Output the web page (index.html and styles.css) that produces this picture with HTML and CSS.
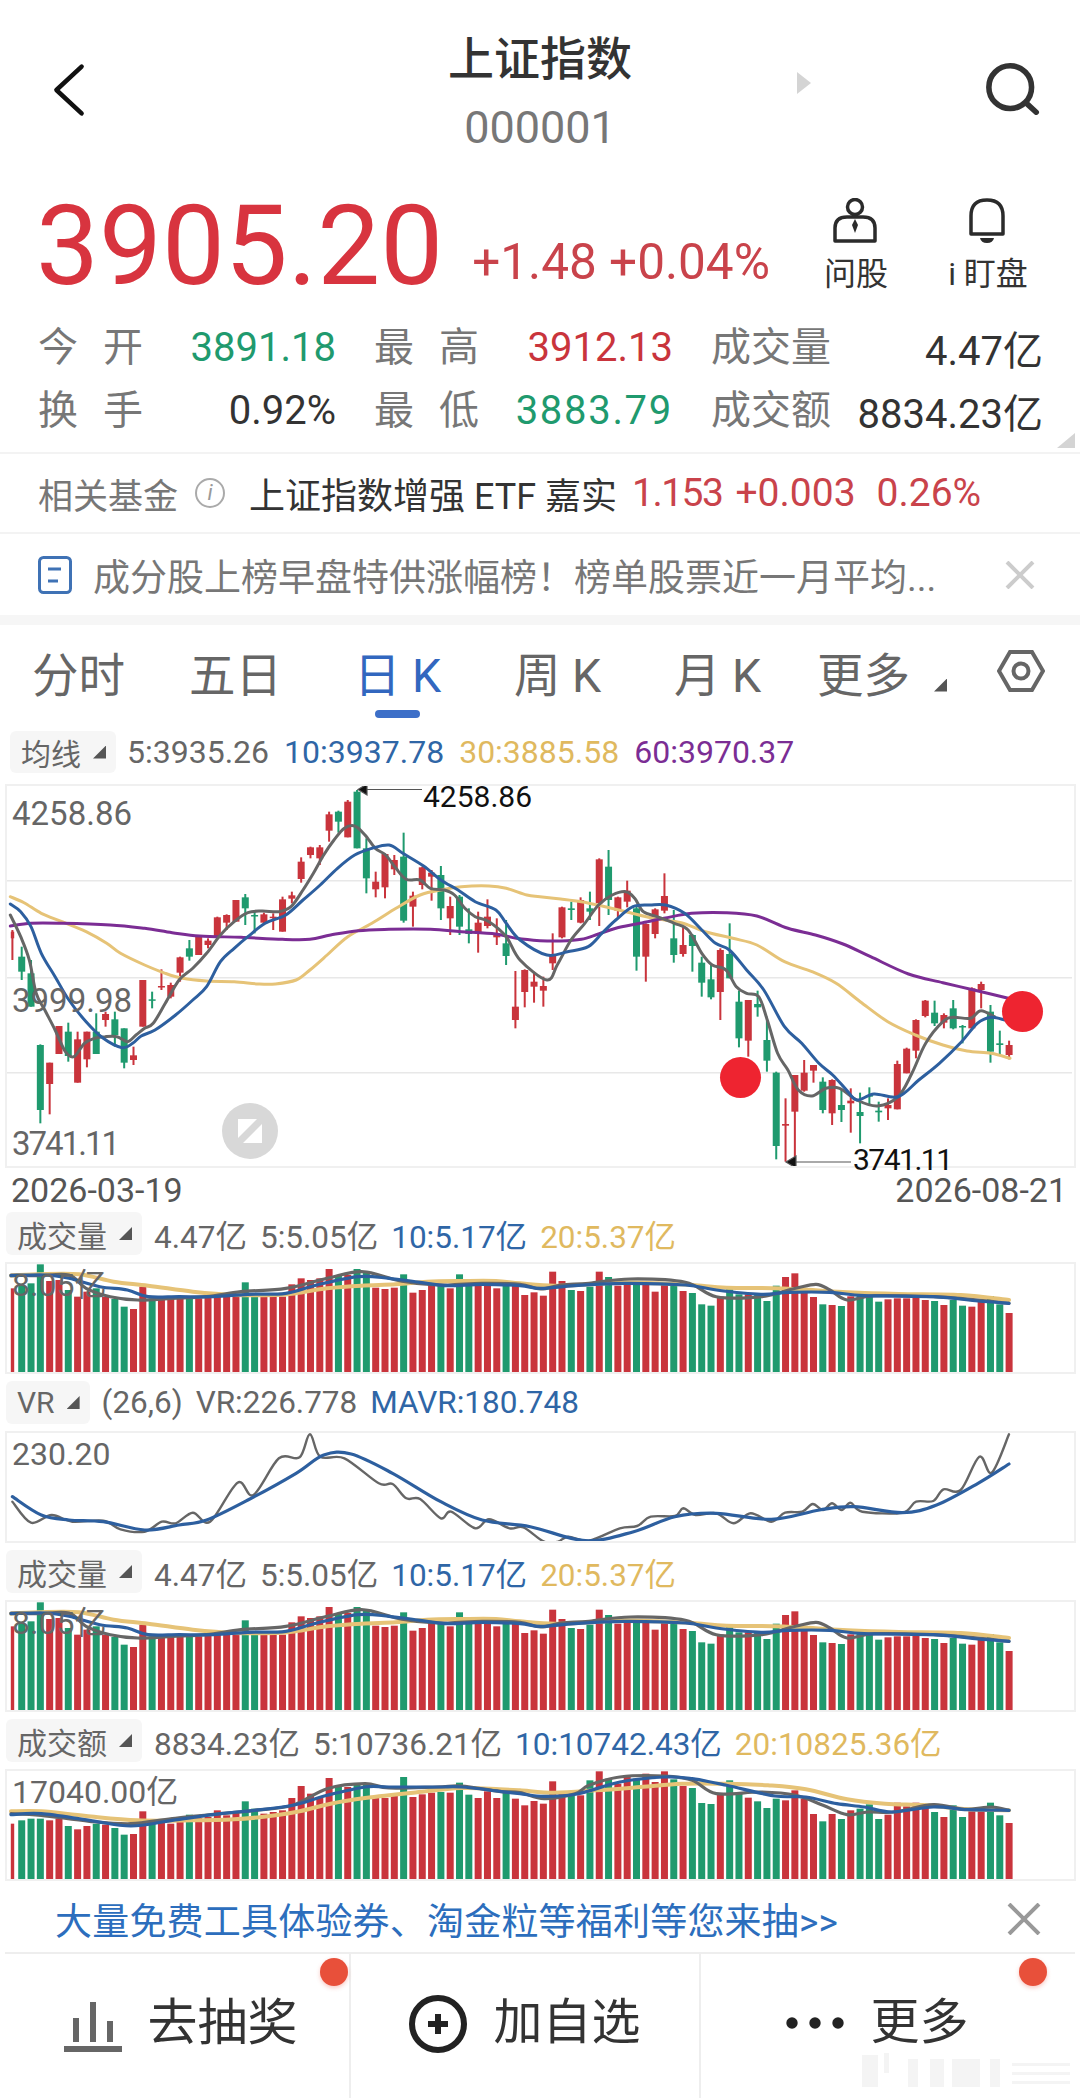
FILE: index.html
```html
<!DOCTYPE html>
<html lang="zh-CN">
<head>
    <meta charset="UTF-8">
    <meta name="viewport" content="width=device-width, initial-scale=1.0">
    <title>上证指数</title>
    <link rel="stylesheet" href="styles.css">
    <script src="chart.js" defer></script>
</head>
<body>

<header class="topbar">
    <div class="side">
        <svg class="back-icon" viewBox="0 0 36 60"><path d="M32 4 L4 30 L32 56"/></svg>
    </div>
    <div class="title-block">
        <div class="title">上证指数</div>
        <div class="code">000001</div>
        <span class="next-arrow"></span>
    </div>
    <div class="side side-right">
        <svg class="search-icon" viewBox="0 0 60 56"><circle cx="27" cy="26" r="23"/><path d="M44 43 L55 53"/></svg>
    </div>
</header>

<section class="quote">
    <div class="price-group">
        <span class="price">3905.20</span>
        <span class="change">+1.48 +0.04%</span>
    </div>
    <div class="quick-links">
        <div class="quick-link">
            <svg class="quick-icon" viewBox="0 0 44 46">
                <circle cx="22" cy="9" r="7.5"/>
                <path d="M2 43 V30 Q2 19 14 19 H30 Q42 19 42 30 V43 Z"/>
                <path class="fill" d="M22 21 L25 27 L22 35 L19 27 Z"/>
            </svg>
            <span>问股</span>
        </div>
        <div class="quick-link">
            <svg class="quick-icon" viewBox="0 0 44 46">
                <path d="M6 36 V18 Q6 2 22 2 Q38 2 38 18 V36 Z"/>
                <path class="fill" d="M15 40 H29 Q28 45 22 45 Q16 45 15 40 Z"/>
            </svg>
            <span>i 盯盘</span>
        </div>
    </div>
</section>

<section class="stats">
    <div class="stat"><span class="stat-label spaced">今开</span><span class="stat-value green">3891.18</span></div>
    <div class="stat"><span class="stat-label spaced">最高</span><span class="stat-value red">3912.13</span></div>
    <div class="stat"><span class="stat-label">成交量</span><span class="stat-value">4.47亿</span></div>
    <div class="stat"><span class="stat-label spaced">换手</span><span class="stat-value">0.92%</span></div>
    <div class="stat"><span class="stat-label spaced">最低</span><span class="stat-value green stat-wide">3883.79</span></div>
    <div class="stat"><span class="stat-label">成交额</span><span class="stat-value">8834.23亿</span></div>
    <span class="corner"></span>
</section>

<section class="fund-row">
    <span class="fund-label">相关基金</span>
    <span class="info-icon">i</span>
    <span class="fund-name">上证指数增强 ETF 嘉实</span>
    <span class="fund-num fund-price">1.153</span>
    <span class="fund-num">+0.003</span>
    <span class="fund-num fund-rate">0.26%</span>
</section>

<section class="news-row">
    <svg class="news-icon" viewBox="0 0 34 38">
        <rect x="1.5" y="1.5" width="31" height="35" rx="4"/>
        <path d="M10 13 H23 M10 25 H20"/>
    </svg>
    <span class="news-text">成分股上榜早盘特供涨幅榜！榜单股票近一月平均...</span>
    <svg class="close-icon" viewBox="0 0 30 28"><path d="M2 1 L28 27 M28 1 L2 27"/></svg>
</section>

<div class="band"></div>

<nav class="tabs">
    <span>分时</span>
    <span>五日</span>
    <span class="tab-active">日 K</span>
    <span>周 K</span>
    <span>月 K</span>
    <span class="tab-more">更多<i class="tri"></i></span>
    <svg class="hex-icon" viewBox="0 0 48 42"><path d="M13 2 H35 L46 21 L35 40 H13 L2 21 Z"/><circle cx="24" cy="21" r="7.5"/></svg>
</nav>

<div class="legend legend-main">
    <span class="chip">均线<i class="tri"></i></span>
    <span>5:3935.26</span>
    <span class="c-blue">10:3937.78</span>
    <span class="c-tan">30:3885.58</span>
    <span class="c-purple">60:3970.37</span>
</div>

<div class="chart-box main-chart">
    <svg id="kline"></svg>
    <span class="axis-label ax-main ax-high">4258.86</span>
    <span class="axis-label ax-main ax-mid">3999.98</span>
    <span class="axis-label ax-main ax-low">3741.11</span>
    <span class="note note-high">4258.86</span>
    <span class="note note-low">3741.11</span>
    <span class="dot dot-one"></span>
    <span class="dot dot-two"></span>
    <svg class="expand-btn" viewBox="0 0 56 56">
        <circle cx="28" cy="28" r="28"/>
        <path d="M16 16 H35 L16 35 Z M40 40 H21 L40 21 Z"/>
    </svg>
</div>

<div class="dates"><span>2026-03-19</span><span>2026-08-21</span></div>

<div class="panel">
    <div class="legend">
        <span class="chip">成交量<i class="tri"></i></span>
        <span>4.47亿</span><span>5:5.05亿</span>
        <span class="c-blue">10:5.17亿</span><span class="c-tan">20:5.37亿</span>
    </div>
    <div class="chart-box sub-chart">
        <svg id="vol1"></svg>
        <span class="axis-label ax-sub">8.05亿</span>
    </div>
</div>

<div class="panel">
    <div class="legend">
        <span class="chip">VR<i class="tri"></i></span>
        <span>(26,6)</span><span>VR:226.778</span>
        <span class="c-blue">MAVR:180.748</span>
    </div>
    <div class="chart-box sub-chart">
        <svg id="vr"></svg>
        <span class="axis-label ax-sub">230.20</span>
    </div>
</div>

<div class="panel">
    <div class="legend">
        <span class="chip">成交量<i class="tri"></i></span>
        <span>4.47亿</span><span>5:5.05亿</span>
        <span class="c-blue">10:5.17亿</span><span class="c-tan">20:5.37亿</span>
    </div>
    <div class="chart-box sub-chart">
        <svg id="vol2"></svg>
        <span class="axis-label ax-sub">8.05亿</span>
    </div>
</div>

<div class="panel panel-last">
    <div class="legend">
        <span class="chip">成交额<i class="tri"></i></span>
        <span>8834.23亿</span><span>5:10736.21亿</span>
        <span class="c-blue">10:10742.43亿</span><span class="c-tan">20:10825.36亿</span>
    </div>
    <div class="chart-box sub-chart">
        <svg id="amount"></svg>
        <span class="axis-label ax-sub">17040.00亿</span>
    </div>
</div>

<section class="banner">
    <span class="banner-text">大量免费工具体验券、淘金粒等福利等您来抽&gt;&gt;</span>
    <svg class="banner-close" viewBox="0 0 34 32"><path d="M2 1 L32 31 M32 1 L2 31"/></svg>
</section>

<footer class="bottom-bar">
    <div class="action action-first">
        <svg class="action-icon" viewBox="0 0 58 52"><path d="M12 18 V42 M29 2 V42 M46 21 V42 M0 49 H58"/></svg>
        <span>去抽奖</span>
        <i class="red-dot"></i>
    </div>
    <div class="action">
        <svg class="action-icon plus-icon" viewBox="0 0 58 58"><circle cx="29" cy="29" r="26"/><path d="M19 29 H39 M29 19 V39"/></svg>
        <span>加自选</span>
    </div>
    <div class="action action-last">
        <svg class="action-icon dots-icon" viewBox="0 0 58 12"><circle cx="6" cy="6" r="5.7"/><circle cx="29" cy="6" r="5.7"/><circle cx="52" cy="6" r="5.7"/></svg>
        <span>更多</span>
        <i class="red-dot"></i>
    </div>
    <svg class="watermark" viewBox="0 0 208 34">
        <rect x="0" y="2" width="16" height="32"/><rect x="22" y="0" width="5" height="20"/>
        <rect x="46" y="6" width="10" height="28"/><rect x="68" y="6" width="14" height="28"/>
        <rect x="90" y="6" width="28" height="28"/><rect x="128" y="6" width="10" height="28"/>
        <rect x="150" y="10" width="58" height="3"/><rect x="150" y="19" width="58" height="3"/><rect x="150" y="28" width="58" height="3"/>
    </svg>
</footer>

</body>
</html>
```

FILE: styles.css
```css
* {
    box-sizing: border-box;
}
html, body {
    margin: 0;
    padding: 0;
    background-color: #fff;
}
body {
    width: 1080px;
    height: 2098px;
    overflow: hidden;
    position: relative;
    font-family: Roboto, "Noto Sans CJK SC", sans-serif;
    color: #333;
}
i {
    font-style: normal;
}
svg {
    display: block;
}

/* top bar */
.topbar {
    display: flex;
    height: 187px;
}
.side {
    width: 200px;
    padding: 63px 0 0 52px;
}
.side-right {
    padding-left: 103px;
}
.back-icon {
    width: 34px;
    height: 54px;
    fill: none;
    stroke: #111;
    stroke-width: 5;
    stroke-linecap: round;
    stroke-linejoin: round;
}
.search-icon {
    width: 60px;
    height: 52px;
    fill: none;
    stroke: #333;
    stroke-width: 6;
    stroke-linecap: round;
}
.title-block {
    flex: 1;
    position: relative;
    text-align: center;
    padding-top: 31px;
}
.title {
    font-size: 46px;
    line-height: 56px;
    font-weight: 500;
}
.code {
    margin-top: 19px;
    font-size: 45px;
    line-height: 44px;
    color: #777;
}
.next-arrow {
    position: absolute;
    left: 597px;
    top: 72px;
    width: 14px;
    height: 22px;
    background-color: #d4d4d4;
    clip-path: polygon(0 0, 100% 50%, 0 100%);
}

/* price */
.quote {
    display: flex;
    justify-content: space-between;
    height: 128px;
    padding: 0 32px 0 36px;
}
.price-group {
    display: flex;
    align-items: flex-start;
    gap: 29px;
    height: 115px;
}
.price {
    padding-top: 3px;
    font-size: 112px;
    line-height: 112px;
    color: #d8343f;
}
.change {
    margin-top: 46px;
    font-size: 49.5px;
    line-height: 58px;
    color: #c9434b;
}
.quick-links {
    display: flex;
    gap: 12px;
    padding-top: 11px;
}
.quick-link {
    width: 120px;
    display: flex;
    flex-direction: column;
    align-items: center;
    font-size: 32px;
    line-height: 40px;
    gap: 10px;
}
.quick-icon {
    width: 44px;
    height: 46px;
    margin-left: -3px;
    fill: none;
    stroke: #2b2b2b;
    stroke-width: 3.5;
    stroke-linejoin: round;
}
.quick-icon .fill {
    fill: #2b2b2b;
    stroke: none;
}

/* stats */
.stats {
    position: relative;
    display: grid;
    grid-template-columns: 298px 299px 332px;
    grid-auto-rows: 63px;
    column-gap: 38px;
    height: 139px;
    padding-left: 38px;
    border-bottom: 2px solid #f3f3f3;
    font-size: 40px;
}
.stat {
    display: flex;
    justify-content: space-between;
    align-items: center;
}
.stat-label {
    padding-bottom: 6px;
    color: #777;
    font-size: 40px;
    white-space: nowrap;
}
.stat-value {
    padding-top: 2px;
}
.stat-wide {
    letter-spacing: 1.7px;
}
.spaced {
    letter-spacing: 25px;
    width: 105px;
}
.green {
    color: #1f9a6e;
}
.red {
    color: #c9343c;
}
.corner {
    position: absolute;
    right: 5px;
    top: 118px;
    width: 18px;
    height: 15px;
    background-color: #d4d4d4;
    clip-path: polygon(100% 0, 100% 100%, 0 100%);
}

/* fund + news */
.fund-row {
    display: flex;
    align-items: center;
    height: 80px;
    padding-left: 38px;
    border-bottom: 2px solid #f3f3f3;
    font-size: 35px;
}
.fund-label {
    color: #777;
    width: 142px;
}
.info-icon {
    width: 30px;
    height: 30px;
    margin: 0 24px 0 15px;
    border: 2px solid #aaa;
    border-radius: 50%;
    color: #999;
    font-size: 22px;
    line-height: 26px;
    text-align: center;
    font-style: italic;
}
.fund-name {
    width: 383px;
    white-space: nowrap;
    font-size: 36px;
}
.fund-num {
    color: #c9434b;
    font-size: 39px;
    margin-right: 13px;
}
.fund-price {
    letter-spacing: -1.5px;
}
.fund-rate {
    margin-left: 8px;
}
.news-row {
    display: flex;
    align-items: center;
    height: 81px;
    padding: 0 45px 0 38px;
}
.news-icon {
    width: 34px;
    height: 38px;
    fill: none;
    stroke: #3f72b5;
    stroke-width: 3;
}
.news-text {
    flex: 1;
    margin-left: 21px;
    color: #777;
    font-size: 37px;
    white-space: nowrap;
}
.close-icon {
    width: 30px;
    height: 28px;
    fill: none;
    stroke: #ccc;
    stroke-width: 4;
}
.band {
    height: 10px;
    background-color: #f6f6f6;
}

/* period tabs */
.tabs {
    position: relative;
    display: grid;
    grid-template-columns: 157px 165px 160px 160px 143px 180px auto;
    align-items: center;
    height: 92px;
    padding-left: 32px;
    font-size: 46.5px;
    color: #666;
}
.tab-active {
    position: relative;
    color: #3267bf;
}
.tab-active::after {
    content: "";
    position: absolute;
    left: 21px;
    top: 72px;
    width: 45px;
    height: 8px;
    border-radius: 4px;
    background-color: #3d6fc8;
}
.tab-more .tri {
    margin-left: 24px;
}
.hex-icon {
    width: 48px;
    height: 42px;
    fill: none;
    stroke: #666;
    stroke-width: 4;
}
.tri {
    display: inline-block;
    width: 13px;
    height: 13px;
    background-color: #555;
    clip-path: polygon(100% 0, 100% 100%, 0 100%);
}

/* indicator legends */
.legend {
    display: flex;
    align-items: center;
    gap: 13px;
    height: 43px;
    margin-left: 6px;
    font-size: 31.5px;
    color: #666;
    white-space: nowrap;
}
.legend-main {
    height: 42px;
    margin: 14px 0 11px 10px;
    gap: 15px;
    font-size: 32px;
}
.chip {
    display: flex;
    align-items: center;
    gap: 12px;
    height: 100%;
    padding: 0 10px 0 11px;
    background-color: #f6f6f6;
    border-radius: 6px;
    margin-right: -1px;
    font-size: 30px;
}
.legend-main .chip {
    margin-right: -4px;
}
.c-blue {
    color: #2f66a6;
}
.c-tan {
    color: #e0b95f;
}
.c-purple {
    color: #7b2d94;
}

/* chart boxes */
.chart-box {
    position: relative;
    margin: 0 4px 0 5px;
    border: 2px solid #f0f0f0;
    overflow: hidden;
}
.chart-box svg {
    width: 100%;
    height: 100%;
}
.main-chart {
    height: 384px;
    overflow: visible;
}
.sub-chart {
    height: 112px;
}
.panel {
    height: 169px;
}
.panel .legend {
    margin-bottom: 7px;
}
.panel-last {
    height: 162px;
}
.axis-label {
    position: absolute;
    left: 5px;
    font-size: 32px;
    line-height: 40px;
    color: #666;
}
.ax-main {
    font-size: 33px;
}
.ax-high {
    top: 8px;
}
.ax-mid {
    top: 195px;
}
.ax-low {
    top: 338px;
    letter-spacing: -2px;
}
.ax-sub {
    top: 1px;
}
.note {
    position: absolute;
    font-size: 30px;
    line-height: 28px;
    color: #111;
}
.note-high {
    left: 416px;
    top: -3px;
}
.note-low {
    left: 846px;
    top: 360px;
    letter-spacing: -1.5px;
}
.dot {
    position: absolute;
    width: 41px;
    height: 41px;
    border-radius: 50%;
    background-color: #ee2430;
}
.dot-one {
    left: 713px;
    top: 271px;
}
.dot-two {
    left: 995px;
    top: 205px;
}
.chart-box .expand-btn {
    position: absolute;
    left: 215px;
    top: 317px;
    width: 56px;
    height: 56px;
}
.expand-btn circle {
    fill: #d8d8d8;
}
.expand-btn path {
    fill: #fff;
}
.dates {
    display: flex;
    justify-content: space-between;
    align-items: center;
    height: 44px;
    padding: 0 13px 0 11px;
    font-size: 34px;
    line-height: 30px;
    color: #555;
}

/* banner + bottom bar */
.banner {
    display: flex;
    align-items: center;
    justify-content: space-between;
    height: 73px;
    margin: 0 5px;
    padding: 4px 34px 0 50px;
    border-bottom: 2px solid #eee;
}
.banner-text {
    font-size: 37px;
    letter-spacing: 0.2px;
    color: #2c6ebd;
}
.banner-close {
    width: 34px;
    height: 32px;
    fill: none;
    stroke: #999;
    stroke-width: 4;
}
.bottom-bar {
    position: relative;
    display: grid;
    grid-template-columns: 351px 350px 379px;
    height: 144px;
    font-size: 49px;
}
.action {
    position: relative;
    display: flex;
    align-items: flex-start;
    justify-content: center;
    gap: 26px;
    padding-top: 38px;
    border-right: 2px solid #eee;
    line-height: 62px;
}
.action-first {
    padding-left: 12px;
    font-size: 50px;
}
.action-last {
    padding-right: 26px;
    border-right: none;
}
.action-icon {
    width: 58px;
    height: 52px;
    margin-top: 8px;
    fill: none;
    stroke: #666;
    stroke-width: 6;
}
.plus-icon {
    height: 58px;
    margin-top: 3px;
    stroke: #222;
}
.dots-icon {
    width: 58px;
    height: 12px;
    margin-top: 25px;
    fill: #222;
    stroke: none;
}
.red-dot {
    position: absolute;
    right: 1px;
    top: 4px;
    width: 28px;
    height: 28px;
    border-radius: 50%;
    background-color: #e8503a;
    box-shadow: 0 2px 4px rgba(232, 80, 58, 0.3);
}
.action-last .red-dot {
    right: 33px;
}
.watermark {
    position: absolute;
    left: 862px;
    top: 99px;
    width: 208px;
    height: 34px;
    fill: #f4f4f4;
}
```

FILE: chart.js
```js
// Chart data below is in the pixel units the charts were measured in:
// x is the candle index, y is stored at 3x and scaled down when drawn.
const COLORS = 'r ggg rr g rr g r gg rr g rrr g rrrrr gg rrrrrrrr g r gg rrr g rrr g r gg rrr g rrrrrr g r g r g rr g rrr g r ggg r gg r ggg rrrr g r g r ggg rrrrr g r gg rr gg r'.replace(/ /g, '');
const RED = '#c9343c';
const GREEN = '#1f9a6e';
const GREY = '#666';
const BLUE = '#2d5f9f';
const TAN = '#e6c377';
const PURPLE = '#7b2d94';

// wick top, body top, body bottom, wick bottom
const CANDLES = [
    [450,455,475,540],[500,530,575,600],[540,580,680,680],[793,795,990,1030],[848,848,912,1003],
    [738,738,822,822],[728,755,828,845],[755,778,908,908],[755,755,838,862],[700,755,822,822],
    [695,702,720,740],[695,718,765,800],[745,745,848,865],[800,826,840,855],[600,600,740,740],
    [635,658,662,685],[568,618,622,630],[608,615,650,655],[530,532,578,605],[480,505,530,542],
    [468,468,525,525],[475,482,495,505],[410,412,470,470],[403,405,428,450],[360,360,425,425],
    [342,352,385,435],[390,405,408,460],[398,403,428,432],[400,410,412,450],[350,358,455,455],
    [335,346,356,370],[232,245,297,308],[200,202,225,235],[195,202,235,255],[95,103,152,185],
    [92,95,125,158],[60,65,172,172],[30,35,205,205],[175,205,295,340],[275,305,328,352],
    [220,222,322,355],[225,240,268,285],[158,230,422,428],[335,347,380,440],[260,262,315,328],
    [270,278,290,362],[258,285,385,420],[350,378,415,465],[345,350,440,465],[385,448,462,490],
    [395,428,458,518],[358,410,438,445],[415,460,472,495],[420,490,528,555],[573,680,720,745],
    [568,570,636,682],[575,605,620,668],[590,618,632,680],[460,525,550,570],[380,382,472,475],
    [365,385,390,420],[352,360,428,430],[335,385,395,420],[235,238,370,438],[210,260,360,405],
    [350,352,392,415],[302,332,365,382],[378,385,530,572],[430,432,530,605],[385,388,462,475],
    [280,348,392,400],[390,475,525,548],[440,495,522,530],[462,465,498,575],[530,548,608,650],
    [555,598,652,658],[505,510,636,720],[430,522,595,595],[632,665,775,802],[660,660,782,830],
    [632,672,682,710],[710,780,842,875],[875,878,1098,1138],[955,1032,1037,1145],[885,885,995,1145],
    [840,878,932,935],[855,855,872,908],[892,905,990,1000],[898,900,1000,1035],[930,975,990,1026],
    [925,962,970,1058],[938,996,1008,1090],[922,945,950,975],[965,992,997,1025],[955,975,985,1020],
    [842,852,988,988],[803,806,880,880],[718,720,812,835],[660,662,708,712],[662,698,730,738],
    [700,705,728,745],[660,685,745,748],[735,738,742,790],[622,625,745,745],[605,612,630,685],
    [675,695,815,848],[752,790,795,825],[782,795,825,838]
];

const VOLUME = [
    100,90,85,28,78,75,105,125,110,100,125,132,155,162,95,130,130,130,125,128,
    130,125,122,125,125,82,125,125,125,125,88,70,75,70,42,60,60,42,50,98,
    102,98,58,113,105,88,88,100,58,85,92,88,100,88,90,120,112,122,50,78,
    105,108,95,50,66,92,88,88,88,110,90,90,108,114,148,152,125,100,118,118,
    120,138,92,66,55,108,126,148,150,153,124,118,125,140,133,130,130,128,135,138,
    150,135,152,155,140,123,148,174
];

const AMOUNT = [
    185,175,170,170,175,170,192,202,192,185,188,198,218,216,148,185,172,185,165,158,
    168,165,145,160,150,118,140,155,150,145,108,72,95,108,48,75,75,68,65,102,
    108,95,45,105,97,92,90,92,62,98,108,88,108,92,110,130,117,125,58,95,
    100,100,55,28,50,65,45,50,35,60,28,52,72,78,123,126,95,55,95,107,
    118,138,110,115,85,110,156,178,156,171,145,140,127,171,158,122,133,122,135,150,
    165,130,165,148,148,122,160,183
];

// [zoomed x, zoomed y] pairs, first half left of the split, second half right of it
const MA_MAIN = [
    { color: TAN, left: [[30,350],[70,368],[120,400],[180,425],[250,455],[310,490],[350,520],[420,555],[480,580],[530,595],[600,603],[680,605],[750,612],[800,612],[860,600],[900,570],[950,525],[1010,470],[1080,430],[1150,385],[1220,345],[1290,328],[1340,320],[1420,318],[1470,325],[1530,345]],
      right: [[0,350],[60,357],[120,365],[180,378],[250,395],[330,415],[410,428],[480,455],[560,475],[630,495],[710,545],[790,575],[860,610],[930,665],[1010,725],[1090,765],[1170,795],[1240,813],[1310,820],[1365,835]] },
    { color: PURPLE, left: [[30,438],[90,430],[180,430],[320,435],[420,445],[500,458],[580,468],[700,472],[820,478],[900,478],[960,465],[1040,452],[1130,448],[1250,448],[1340,455],[1440,462],[1500,475]],
      right: [[0,482],[60,483],[120,478],[170,462],[220,445],[290,430],[360,415],[440,400],[540,398],[630,408],[720,445],[800,465],[880,492],[960,530],[1070,582],[1170,608],[1260,630],[1360,655]] },
    { color: GREY, left: [[30,405],[60,470],[85,540],[105,640],[130,690],[160,750],[190,815],[215,830],[245,790],[275,775],[305,770],[340,770],[370,785],[395,765],[420,745],[445,730],[480,670],[520,600],[560,565],[600,520],[640,465],[680,425],[720,398],[760,393],[810,395],[845,380],[880,330],[910,280],[940,225],[970,180],[1000,145],[1030,138],[1060,165],[1090,205],[1120,225],[1150,265],[1180,298],[1220,300],[1250,325],[1290,330],[1320,345],[1350,385],[1380,410],[1420,425],[1470,470],[1510,540]],
      right: [[20,600],[50,555],[90,480],[130,430],[170,375],[210,345],[250,335],[275,355],[300,395],[340,410],[390,430],[430,450],[470,520],[500,555],[540,570],[570,620],[600,640],[635,650],[660,720],[690,820],[720,870],[750,930],[790,948],[830,925],[870,925],[920,960],[980,978],[1040,950],[1080,880],[1120,790],[1170,725],[1200,712],[1250,715],[1280,692],[1320,710]] },
    { color: BLUE, left: [[30,372],[60,395],[90,440],[120,520],[160,590],[200,660],[250,725],[300,775],[355,803],[385,790],[410,768],[450,750],[510,705],[560,660],[600,620],[640,545],[680,505],[720,470],[770,430],[830,405],[880,360],[930,315],[980,265],[1030,225],[1080,205],[1130,195],[1170,220],[1230,258],[1280,300],[1330,330],[1380,365],[1440,390],[1470,430],[1510,480]],
      right: [[20,525],[80,515],[140,500],[180,460],[220,420],[270,380],[320,375],[365,375],[420,400],[470,450],[510,490],[550,510],[600,570],[650,630],[710,740],[760,790],[810,850],[850,885],[890,930],[920,960],[970,942],[1040,950],[1100,900],[1160,850],[1220,790],[1270,730],[1310,712],[1350,720]] }
];

const MA_VOLUME = [
    { color: TAN, width: 4, left: [[32,62],[110,58],[230,58],[330,80],[430,92],[560,110],[680,120],[800,120],[860,115],[950,100],[1050,92],[1150,88],[1240,80],[1340,78],[1440,78]],
      right: [[0,85],[100,92],[200,88],[300,82],[400,85],[500,90],[600,98],[740,100],[850,105],[950,112],[1100,117],[1280,120],[1420,135]] },
    { color: GREY, width: 3.2, left: [[32,60],[110,62],[200,60],[250,100],[320,125],[400,135],[500,130],[600,125],[700,110],[830,100],[950,70],[1050,50],[1150,75],[1210,85],[1300,90],[1400,85]],
      right: [[0,88],[60,102],[120,90],[200,85],[320,72],[480,82],[570,125],[700,125],[800,100],[860,88],[900,105],[950,135],[1030,122],[1200,125],[1300,132],[1420,145]] },
    { color: BLUE, width: 3.2, left: [[32,62],[130,60],[200,70],[290,95],[370,105],[430,125],[520,125],[620,125],[720,118],[830,115],[920,90],[1040,65],[1130,70],[1220,82],[1300,92],[1400,88]],
      right: [[0,92],[60,100],[160,92],[300,85],[480,90],[570,105],[700,118],[780,112],[900,112],[1000,122],[1200,125],[1330,138],[1420,145]] }
];

const MA_AMOUNT = [
    { color: TAN, width: 4, left: [[32,148],[120,148],[250,162],[400,175],[560,175],[680,172],[760,165],[860,150],[960,125],[1060,108],[1200,92],[1340,78],[1450,82]],
      right: [[0,85],[100,92],[220,85],[350,75],[470,65],[600,65],[720,70],[830,82],[950,112],[1060,125],[1180,130],[1300,142],[1420,145]] },
    { color: GREY, width: 3.2, left: [[32,155],[120,160],[260,178],[380,185],[500,170],[640,155],[740,145],[850,130],[950,80],[1060,65],[1130,78],[1270,75],[1340,72],[1450,88]],
      right: [[0,92],[70,110],[160,95],[200,70],[290,45],[420,42],[500,55],[570,95],[700,90],[800,100],[880,130],[950,158],[1010,150],[1090,150],[1200,128],[1290,142],[1370,135],[1420,145]] },
    { color: BLUE, width: 3.2, left: [[32,158],[120,155],[260,175],[380,192],[500,175],[640,155],[740,145],[850,130],[950,100],[1060,75],[1130,75],[1270,75],[1340,75],[1450,88]],
      right: [[0,95],[70,103],[170,95],[290,60],[420,45],[500,50],[600,70],[740,102],[830,105],[920,125],[1000,135],[1080,150],[1200,135],[1300,143],[1420,145]] }
];

const VR_GREY = [[18,905],[45,968],[75,945],[105,965],[150,962],[175,988],[210,995],[235,965],[255,970],[280,938],[305,965],[345,848],[368,885],[405,775],[435,772],[450,703],[465,770],[500,775],[550,850],[570,852],[590,895],[610,897],[640,955],[655,935],[690,985],[710,958],[740,985],[760,982],[790,1025],[810,1025],[825,1010],[855,1022],[900,985],[925,978],[945,950],[980,948],[992,925],[1010,945],[1040,940],[1065,970],[1090,940],[1120,965],[1140,938],[1165,935],[1180,912],[1195,930],[1208,910],[1222,930],[1235,908],[1252,935],[1310,938],[1330,905],[1355,903],[1370,868],[1395,870],[1422,770],[1440,818],[1465,703]];
const VR_BLUE = [[18,890],[60,945],[100,960],[150,965],[210,990],[260,975],[300,960],[360,900],[430,820],[470,765],[510,762],[570,820],[640,905],[700,960],[770,980],[850,1022],[920,995],[980,950],[1040,940],[1120,958],[1190,930],[1240,920],[1310,938],[1360,915],[1420,850],[1465,792]];

const NS = 'http://www.w3.org/2000/svg';
const STEP = 9.315;

function barX(i) {
    return 12.4 + STEP * i;
}

function add(svg, tag, attrs) {
    const el = document.createElementNS(NS, tag);
    Object.keys(attrs).forEach(k => el.setAttribute(k, attrs[k]));
    svg.appendChild(el);
    return el;
}

// Smooth line through the points (Catmull-Rom turned into beziers)
function smoothPath(pts) {
    let d = `M${pts[0][0].toFixed(1)} ${pts[0][1].toFixed(1)}`;
    for (let i = 0; i < pts.length - 1; i++) {
        const p0 = pts[i - 1] || pts[i];
        const p1 = pts[i];
        const p2 = pts[i + 1];
        const p3 = pts[i + 2] || p2;
        const c1x = p1[0] + (p2[0] - p0[0]) / 6;
        const c1y = p1[1] + (p2[1] - p0[1]) / 6;
        const c2x = p2[0] - (p3[0] - p1[0]) / 6;
        const c2y = p2[1] - (p3[1] - p1[1]) / 6;
        d += `C${c1x.toFixed(1)} ${c1y.toFixed(1)} ${c2x.toFixed(1)} ${c2y.toFixed(1)} ${p2[0].toFixed(1)} ${p2[1].toFixed(1)}`;
    }
    return d;
}

function drawLine(svg, pts, color, width) {
    add(svg, 'path', { d: smoothPath(pts), fill: 'none', stroke: color, 'stroke-width': width, 'stroke-linejoin': 'round', 'stroke-linecap': 'round' });
}

// Splits are where the two measuring crops started
function toPixels(line, leftOrigin, rightOrigin, y0) {
    const a = line.left.map(p => [leftOrigin + p[0] / 2.904, y0 + p[1] / 3]);
    const b = line.right.map(p => [rightOrigin + p[0] / 2.904, y0 + p[1] / 3]);
    return a.concat(b);
}

function setView(svg, top, height) {
    // box content starts 2px inside the border
    svg.setAttribute('viewBox', `7 ${top + 2} 1067 ${height - 4}`);
    svg.setAttribute('preserveAspectRatio', 'none');
}

function drawBars(svg, tops, y0, bottom) {
    tops.forEach((t, i) => {
        const x = barX(i);
        const left = i === 0 ? x - 1.6 : x - 3.5;
        const width = i === 0 ? 3.4 : 7;
        const y = y0 + t / 3;
        add(svg, 'rect', { x: left, y: y, width: width, height: bottom - y, fill: COLORS[i] === 'r' ? RED : GREEN });
    });
}

function drawKline() {
    const svg = document.getElementById('kline');
    setView(svg, 784, 384);
    [880, 977, 1072].forEach(y => add(svg, 'rect', { x: 7, y: y, width: 1065, height: 1.5, fill: '#e8e8e8' }));

    CANDLES.forEach((c, i) => {
        const x = barX(i);
        const color = COLORS[i] === 'r' ? RED : GREEN;
        const y = v => 780 + v / 3;
        add(svg, 'rect', { x: x - 1, y: y(c[0]), width: 2, height: y(c[3]) - y(c[0]), fill: color });
        const bodyH = Math.max(y(c[2]) - y(c[1]), 1.5);
        add(svg, 'rect', { x: i === 0 ? x - 1.6 : x - 3.5, y: y(c[1]), width: i === 0 ? 3.4 : 7, height: bodyH, fill: color });
    });

    MA_MAIN.forEach(line => drawLine(svg, toPixels(line, 0, 540, 780), line.color, 3));

    // arrows to the high and low labels
    add(svg, 'path', { d: 'M358 789.5 L367 784 V795 Z M367 789.5 H422', fill: '#111', stroke: '#555', 'stroke-width': 1.2 });
    add(svg, 'path', { d: 'M786 1162 L796 1156 V1168 Z M796 1162 H851', fill: '#111', stroke: '#555', 'stroke-width': 1.2 });
}

function drawVolume(id, top) {
    const svg = document.getElementById(id);
    setView(svg, top, 112);
    const y0 = top - 7;
    drawBars(svg, VOLUME, y0, top + 112);
    MA_VOLUME.forEach(line => drawLine(svg, toPixels(line, 0, 520, y0), line.color, line.width));
}

function drawAmount(id, top) {
    const svg = document.getElementById(id);
    setView(svg, top, 112);
    const y0 = top - 7;
    drawBars(svg, AMOUNT, y0, top + 112);
    MA_AMOUNT.forEach(line => drawLine(svg, toPixels(line, 0, 520, y0), line.color, line.width));
}

function drawVr(id, top) {
    const svg = document.getElementById(id);
    setView(svg, top, 112);
    const scale = p => [p[0] / 1.452, 1200 + p[1] / 3];
    drawLine(svg, VR_GREY.map(scale), GREY, 2.4);
    drawLine(svg, VR_BLUE.map(scale), BLUE, 3.2);
}

drawKline();
drawVolume('vol1', 1262);
drawVr('vr', 1431);
drawVolume('vol2', 1600);
drawAmount('amount', 1769);
```
